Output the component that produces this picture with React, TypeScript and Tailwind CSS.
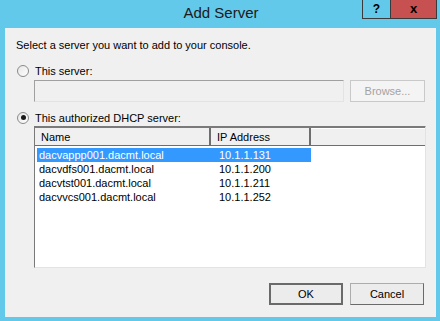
const servers = [
  { name: "dacvappp001.dacmt.local", ip: "10.1.1.131" },
  { name: "dacvdfs001.dacmt.local", ip: "10.1.1.200" },
  { name: "dacvtst001.dacmt.local", ip: "10.1.1.211" },
  { name: "dacvvcs001.dacmt.local", ip: "10.1.1.252" },
];

function Radio({ checked }: { checked?: boolean }) {
  return (
    <span className="w-[12px] h-[12px] rounded-full border border-[#8a8a8a] bg-gradient-to-br from-[#e6e6e6] to-white flex items-center justify-center">
      {checked && <span className="w-[5px] h-[5px] rounded-full bg-[#1a1a1a]" />}
    </span>
  );
}

export default function App() {
  return (
    <div
      className="w-[440px] h-[321px] bg-[#63c9eb] flex flex-col text-black"
      style={{ fontFamily: '"Liberation Sans", Arial, sans-serif' }}
    >
      {/* title bar */}
      <div className="relative h-[28px] flex items-center justify-center">
        <span className="text-[15px] text-[#1a1a1a] mt-[-2px] ml-[2px]">Add Server</span>
        <div className="absolute right-[3px] top-0 flex h-[19px]">
          <div className="w-[29px] border border-t-0 border-[#3a3a3a] flex items-center justify-center text-[12px] font-bold">
            ?
          </div>
          <div className="w-[46px] border border-t-0 border-l-0 border-[#3a3a3a] bg-[#c75050] flex items-center justify-center text-[13px] font-bold">
            x
          </div>
        </div>
      </div>

      {/* client area */}
      <div className="ml-[5px] mr-[4px] h-[289px] bg-[#f0f0f0] flex flex-col text-[11px] leading-[14px]">
        <div className="pt-[10px] pl-[11px]">Select a server you want to add to your console.</div>

        <div className="mt-[12px] pl-[12px] flex items-center gap-[6px] h-[13px]">
          <Radio />
          <span>This server:</span>
        </div>

        <div className="mt-[3px] pl-[29px] flex gap-[6px] h-[22px]">
          <div className="w-[310px] border border-[#a0a0a0] border-b-[#e3e3e3] border-r-[#e3e3e3] bg-[#f0f0f0]" />
          <div className="w-[75px] border border-[#c9c9c9] bg-[#f4f4f4] text-[#a3a3a3] flex items-center justify-center">
            Browse...
          </div>
        </div>

        <div className="mt-[9px] pl-[12px] flex items-center gap-[6px] h-[13px]">
          <Radio checked />
          <span>This authorized DHCP server:</span>
        </div>

        <div className="mt-[2px] ml-[29px] w-[392px] h-[142px] border border-[#7a7a7a] border-b-[#e3e3e3] border-r-[#e3e3e3] bg-white flex flex-col">
          <div className="flex h-[19px] bg-[#f0f0f0] border-y border-t-[#7a7a7a] border-b-[#6e6e6e]">
            <div className="w-[176px] border-r-2 border-[#6e6e6e] pl-[6px] flex items-center">Name</div>
            <div className="w-[100px] border-r-2 border-[#6e6e6e] pl-[6px] flex items-center">IP Address</div>
            <div className="flex-1 border-t border-white" />
          </div>
          <div className="pt-[2px] pl-[2px]">
            {servers.map((s, i) => (
              <div
                key={s.name}
                className={`flex h-[14px] items-center w-[274px] ${i === 0 ? "bg-[#3399ff] text-white" : ""}`}
              >
                <span className="w-[176px] pl-[2px]">{s.name}</span>
                <span className="pl-[6px]">{s.ip}</span>
              </div>
            ))}
          </div>
        </div>

        <div className="mt-[15px] flex justify-end gap-[7px] pr-[12px]">
          <button className="w-[74px] h-[22px] border-2 border-[#6a6a6a] bg-[#ececec] flex items-center justify-center">
            OK
          </button>
          <button className="w-[74px] h-[22px] border border-[#acacac] border-b-[#6a6a6a] border-r-[#6a6a6a] bg-[#ececec] flex items-center justify-center">
            Cancel
          </button>
        </div>
      </div>
    </div>
  );
}
